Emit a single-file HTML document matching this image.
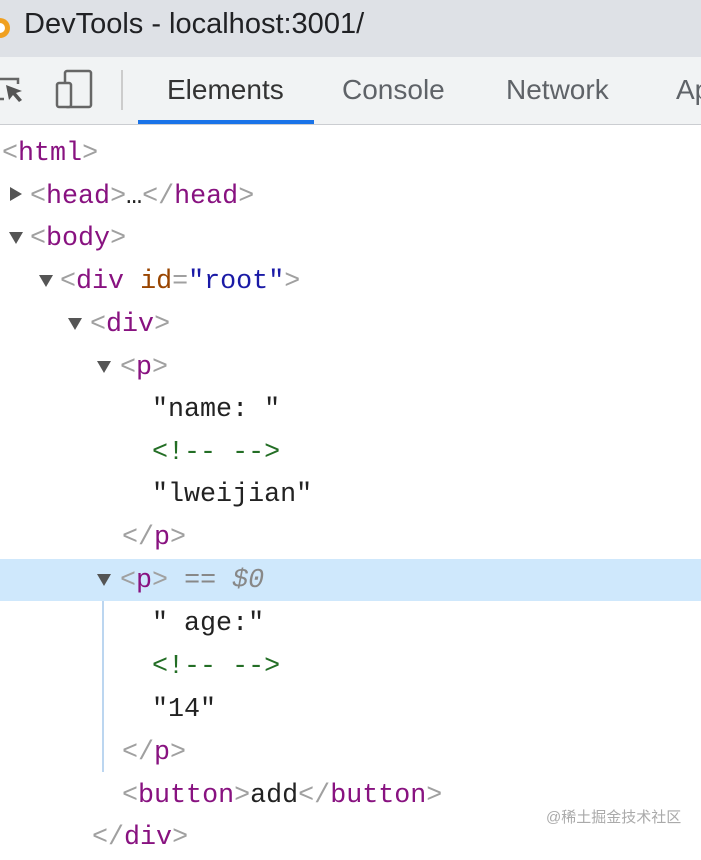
<!DOCTYPE html>
<html><head><meta charset="utf-8"><style>
body{margin:0;width:701px;height:847px;overflow:hidden;background:#fff;position:relative;font-family:"Liberation Sans",sans-serif}
.title{position:absolute;left:0;top:0;width:701px;height:57px;background:#dee1e6}
.title span{position:absolute;left:24px;top:8px;font-size:29px;color:#202124}
.tb{position:absolute;left:0;top:57px;width:701px;height:67px;background:#f1f3f4;border-bottom:1px solid #cbcdd1}
.tab{position:absolute;top:17px;font-size:28px;color:#5f6368}
.row{position:absolute;left:0;width:701px;height:43px;font-family:"Liberation Mono",monospace;font-size:26.7px;line-height:43px;white-space:pre}
.row span.t{position:absolute;top:2px}
.g{color:#a0a0a0}.p{color:#881280}.a{color:#994500}.v{color:#1a1aa6}.c{color:#236e25}.k{color:#222}.s{color:#888;font-style:italic}
.arr{position:absolute;width:0;height:0}
.down{border-left:7px solid transparent;border-right:7px solid transparent;border-top:12px solid #555;top:16px}
.right{border-top:7px solid transparent;border-bottom:7px solid transparent;border-left:12px solid #555;top:13px}
</style></head><body>
<div class="title"><svg style="position:absolute;left:-10px;top:14px" width="20" height="28"><circle cx="10" cy="14" r="10" fill="#f0a020"/><circle cx="10" cy="14" r="5" fill="#fff"/></svg><span>DevTools - localhost:3001/</span></div>
<div class="tb">
<svg style="position:absolute;left:0;top:12px" width="40" height="44"><path d="M0 10h18v5M0 30h4" stroke="#666" stroke-width="2.5" fill="none"/><path d="M6 16l16 6-6 2 6 7-3 2-6-7-4 5z" fill="#555"/></svg>
<svg style="position:absolute;left:55px;top:12px" width="40" height="44"><rect x="10" y="2" width="26" height="36" rx="2" fill="none" stroke="#666" stroke-width="2.5"/><rect x="2" y="14" width="14" height="24" rx="2" fill="#f1f3f4" stroke="#666" stroke-width="2.5"/></svg>
<div style="position:absolute;left:121px;top:13px;width:2px;height:40px;background:#ccc"></div>
<span class="tab" style="left:167px;color:#333">Elements</span>
<div style="position:absolute;left:138px;top:63px;width:176px;height:4px;background:#1a73e8"></div>
<span class="tab" style="left:342px">Console</span>
<span class="tab" style="left:506px">Network</span>
<span class="tab" style="left:676px">Ap</span>
</div>
<div style="position:absolute;left:0;top:559px;width:701px;height:42px;background:#cfe8fc"></div>
<div style="position:absolute;left:102px;top:601px;width:2px;height:171px;background:#bcd6f0"></div>

<div class="row" style="top:131px"><span class="t" style="left:2px"><span class="g">&lt;</span><span class="p">html</span><span class="g">&gt;</span></span></div>
<div class="row" style="top:174px"><i class="arr right" style="left:10px"></i><span class="t" style="left:30px"><span class="g">&lt;</span><span class="p">head</span><span class="g">&gt;</span><span class="k">…</span><span class="g">&lt;/</span><span class="p">head</span><span class="g">&gt;</span></span></div>
<div class="row" style="top:216px"><i class="arr down" style="left:9px"></i><span class="t" style="left:30px"><span class="g">&lt;</span><span class="p">body</span><span class="g">&gt;</span></span></div>
<div class="row" style="top:259px"><i class="arr down" style="left:39px"></i><span class="t" style="left:60px"><span class="g">&lt;</span><span class="p">div</span> <span class="a">id</span><span class="g">=</span><span class="v">"root"</span><span class="g">&gt;</span></span></div>
<div class="row" style="top:302px"><i class="arr down" style="left:68px"></i><span class="t" style="left:90px"><span class="g">&lt;</span><span class="p">div</span><span class="g">&gt;</span></span></div>
<div class="row" style="top:345px"><i class="arr down" style="left:97px"></i><span class="t" style="left:120px"><span class="g">&lt;</span><span class="p">p</span><span class="g">&gt;</span></span></div>
<div class="row" style="top:387px"><span class="t k" style="left:152px">"name: "</span></div>
<div class="row" style="top:430px"><span class="t c" style="left:152px">&lt;!-- --&gt;</span></div>
<div class="row" style="top:472px"><span class="t k" style="left:152px">"lweijian"</span></div>
<div class="row" style="top:515px"><span class="t" style="left:122px"><span class="g">&lt;/</span><span class="p">p</span><span class="g">&gt;</span></span></div>
<div class="row" style="top:558px"><i class="arr down" style="left:97px"></i><span class="t" style="left:120px"><span class="g">&lt;</span><span class="p">p</span><span class="g">&gt;</span> <span class="s">== $0</span></span></div>
<div class="row" style="top:601px"><span class="t k" style="left:152px">" age:"</span></div>
<div class="row" style="top:644px"><span class="t c" style="left:152px">&lt;!-- --&gt;</span></div>
<div class="row" style="top:687px"><span class="t k" style="left:152px">"14"</span></div>
<div class="row" style="top:730px"><span class="t" style="left:122px"><span class="g">&lt;/</span><span class="p">p</span><span class="g">&gt;</span></span></div>
<div class="row" style="top:773px"><span class="t" style="left:122px"><span class="g">&lt;</span><span class="p">button</span><span class="g">&gt;</span><span class="k">add</span><span class="g">&lt;/</span><span class="p">button</span><span class="g">&gt;</span></span></div>
<div class="row" style="top:815px"><span class="t" style="left:92px"><span class="g">&lt;/</span><span class="p">div</span><span class="g">&gt;</span></span></div>
<div style="position:absolute;left:546px;top:806px;font-size:15px;color:#aaa;font-family:'Liberation Sans','Noto Sans CJK SC',sans-serif">@稀土掘金技术社区</div>
</body></html>
